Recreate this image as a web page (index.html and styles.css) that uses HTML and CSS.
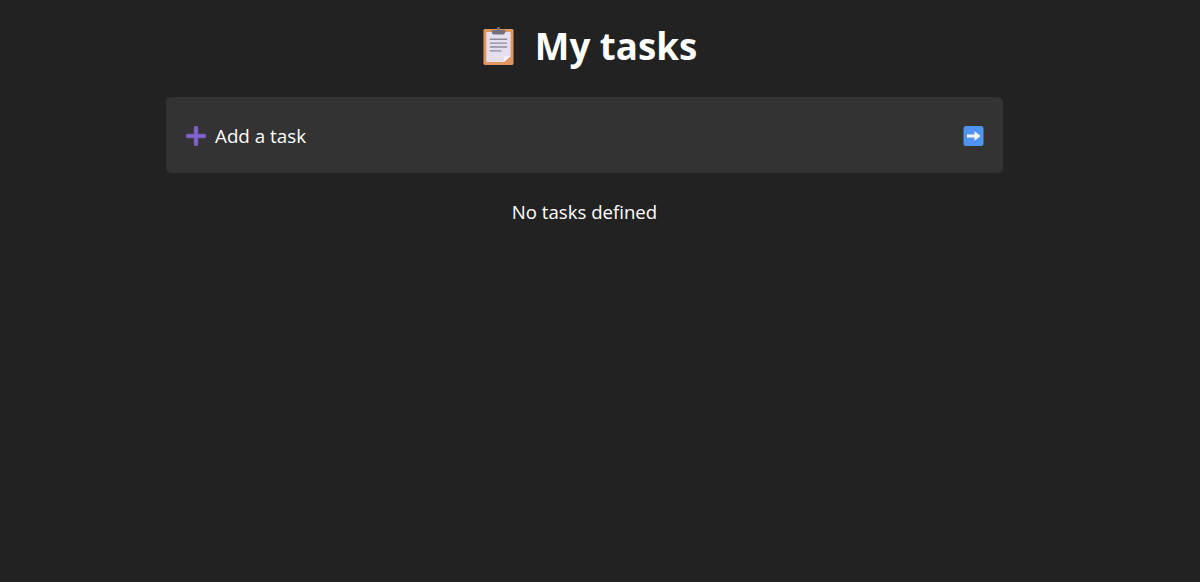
FILE: index.html
```html
<!DOCTYPE html>
<html lang="en">
<head>
  <meta charset="UTF-8" />
  <meta name="viewport" content="width=device-width, initial-scale=1.0" />
  <title>My tasks</title>
  <link rel="stylesheet" href="styles.css">
</head>
<body>
  <main class="page">
    <h1 class="title">
      <svg class="title-icon" viewBox="0 0 32 40" aria-hidden="true">
        <rect x="0.5" y="2.5" width="31" height="37" rx="1.5" fill="#e0975f"/>
        <path d="M3.5 5.5h25v25l-7 6h-18z" fill="#e4deef"/>
        <path d="M28.5 30.5l-7 6v-6z" fill="#f6f3fa"/>
        <path d="M9 5V3.500h5.500V1.500c0-1.500 3-1.500 3 0v2H23V5c0 1.500-.8 3-2.500 3h-9C9.800 8 9 6.500 9 5z" fill="#75707c"/>
        <path d="M7 13h18M7 17h18M7 21h18M7 25h12" stroke="#8f8a98" stroke-width="1.400"/>
      </svg>
      <span>My tasks</span>
    </h1>

    <form class="add-task">
      <svg class="plus-icon" viewBox="0 0 20 20" aria-hidden="true">
        <path d="M10 2v16M2 10h16" stroke="#7a5cc0" stroke-width="4.500" stroke-linecap="round"/>
        <path d="M10 3v14M3 10h14" stroke="#8468cc" stroke-width="1.500" stroke-linecap="round"/>
      </svg>
      <span class="add-label">Add a task</span>
      <svg class="arrow-icon" viewBox="0 0 20 20" aria-hidden="true">
        <rect width="20" height="20" rx="2.500" fill="#4f94ee"/>
        <path d="M3.500 10h9" stroke="#eef2fb" stroke-width="3"/>
        <path d="M11 5l6 5-6 5z" fill="#eef2fb"/>
      </svg>
    </form>

    <p class="empty">No tasks defined</p>
  </main>
</body>
</html>
```

FILE: styles.css
```css
body {
  margin: 0;
  background: #222222;
  color: #fff;
  font-family: "Open Sans", "Noto Sans", sans-serif;
  min-height: 100vh;
}

/* content column sits a bit left of true centre, same as the original */
.page {
  width: 1169px;
  display: flex;
  flex-direction: column;
  align-items: center;
}

.title {
  display: flex;
  align-items: center;
  gap: 21px;
  height: 97px;
  margin: 0 0 0 11px;
  font-size: 36.7px;
  font-weight: 700;
  box-sizing: border-box;
  padding-bottom: 6px;
}

.title-icon {
  width: 31px;
  height: 40px;
}

.add-task {
  width: 837px;
  height: 76px;
  box-sizing: border-box;
  padding: 2px 19px 0 20px;
  display: flex;
  align-items: center;
  background: #333333;
  border-radius: 5px;
}

.plus-icon {
  width: 20px;
  height: 20px;
  margin-right: 9px;
}

.add-label {
  flex: 1;
  font-size: 18.8px;
}

.arrow-icon {
  width: 21px;
  height: 20px;
}

.empty {
  margin: 26px 0 0;
  font-size: 18.6px;
  line-height: 26px;
}
```
